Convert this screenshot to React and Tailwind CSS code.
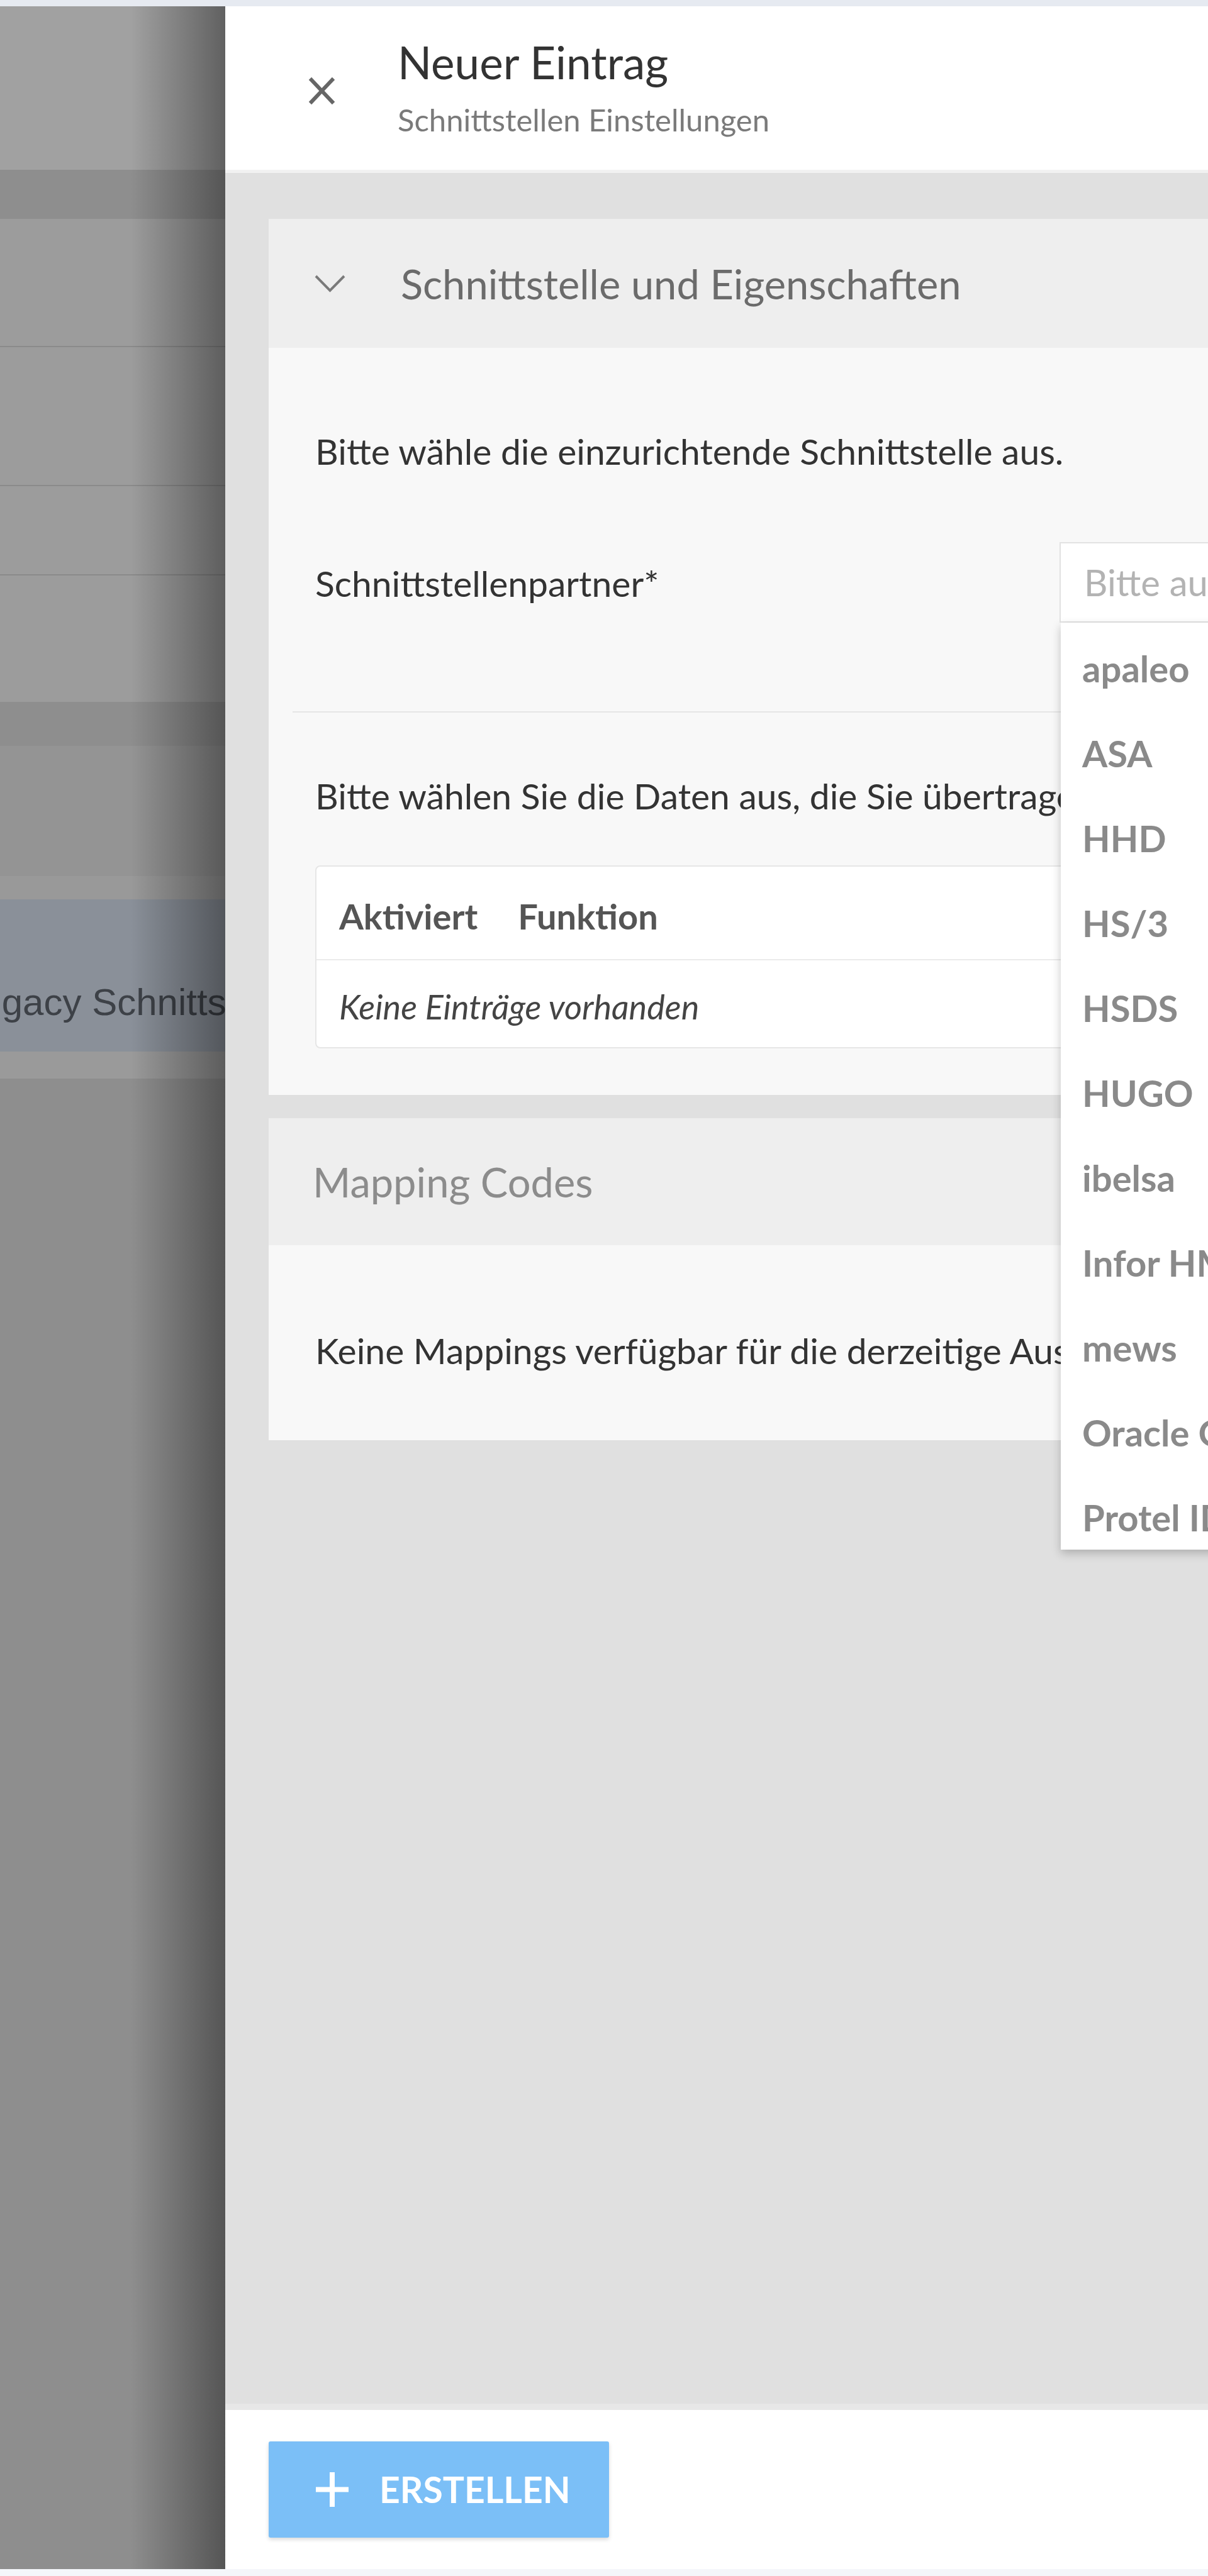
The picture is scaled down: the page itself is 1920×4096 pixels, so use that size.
import React from 'react';

const partners = ['apaleo', 'ASA', 'HHD', 'HS/3', 'HSDS', 'HUGO', 'ibelsa', 'Infor HMS', 'mews', 'Oracle OPERA', 'Protel IDS', 'Protel Air'];

function CloseIcon() {
  return (
    <svg viewBox="0 0 43 45" className="w-[43px] h-[45px] shrink-0">
      <line x1="5" y1="5" x2="38" y2="40" stroke="#666" strokeWidth="6" strokeLinecap="square" />
      <line x1="38" y1="5" x2="5" y2="40" stroke="#666" strokeWidth="6" strokeLinecap="square" />
    </svg>
  );
}

function Chevron() {
  return (
    <svg viewBox="0 0 51 29" className="w-[51px] h-[29px] shrink-0">
      <polyline points="3,3 25.5,26 48,3" fill="none" stroke="#7a7a7a" strokeWidth="4" />
    </svg>
  );
}

function PlusIcon() {
  return (
    <svg viewBox="0 0 52 55" className="w-[52px] h-[55px] shrink-0">
      <line x1="26" y1="0" x2="26" y2="55" stroke="#fff" strokeWidth="8" />
      <line x1="0" y1="27.5" x2="52" y2="27.5" stroke="#fff" strokeWidth="8" />
    </svg>
  );
}

// dimmed page behind the drawer
function Backdrop() {
  return (
    <div className="relative w-[358px] shrink-0 flex flex-col overflow-hidden">
      <div className="h-[260px] bg-[#a1a1a1]" />
      <div className="h-[78px] bg-[#8e8e8e]" />
      <div className="h-[204px] bg-[#9c9c9c] border-b-2 border-[#8a8a8a]" />
      <div className="h-[221px] bg-[#9c9c9c] border-b-2 border-[#8a8a8a]" />
      <div className="h-[142px] bg-[#9c9c9c] border-b-2 border-[#8a8a8a]" />
      <div className="h-[201px] bg-[#9c9c9c]" />
      <div className="h-[70px] bg-[#8e8e8e]" />
      <div className="h-[207px] bg-[#949494]" />
      <div className="h-[37px] bg-[#999999]" />
      <div className="h-[242px] bg-[#8a9099] pt-[129px]">
        <span className="block -ml-[64px] whitespace-nowrap font-['Liberation_Sans',sans-serif] text-[60px] leading-[69px] text-[#3d4147]">
          Legacy Schnittstellen
        </span>
      </div>
      <div className="h-[43px] bg-[#9a9a9a]" />
      <div className="flex-1 bg-[#8e8e8e]" />
      <div className="absolute inset-y-0 right-0 w-[150px] bg-linear-to-r from-black/0 to-black/40" />
    </div>
  );
}

export default function App() {
  return (
    <div className="relative w-[1920px] h-[4096px] overflow-hidden bg-[#f4f6fa] flex flex-col font-['Lato',sans-serif]">
      <div className="h-[10px] bg-[#e6eaf1] shrink-0" />
      <div className="flex h-[4075px] shrink-0">
        <Backdrop />

        <div className="w-[1800px] shrink-0 flex flex-col">
          <header className="h-[265px] shrink-0 bg-white border-b-[5px] border-[#f1f1f1] flex items-start pl-[132px]">
            <div className="mt-[112px]">
              <CloseIcon />
            </div>
            <div className="ml-[99px] mt-[46px]">
              <h1 className="text-[71px] leading-[85px] text-[#333]">Neuer Eintrag</h1>
              <p className="mt-[20px] text-[49px] leading-[59px] text-[#7a7a7a]">Schnittstellen Einstellungen</p>
            </div>
          </header>

          <main className="flex-1 bg-[#e0e0e0] pt-[73px] px-[69px]">
            <section>
              <div className="h-[205px] bg-[#eeeeee] flex items-center pl-[72px]">
                <Chevron />
                <span className="ml-[87px] text-[65px] leading-[78px] text-[#6b6b6b]">Schnittstelle und Eigenschaften</span>
              </div>
              <div className="bg-[#f8f8f8] px-[38px] pb-[74px]">
                <div className="px-[36px] pt-[130px]">
                  <p className="text-[57px] leading-[68px] text-[#333]">Bitte wähle die einzurichtende Schnittstelle aus.</p>
                  <div className="mt-[111px] flex">
                    <div className="w-[1183px] shrink-0 pt-[31px] text-[57px] leading-[68px] text-[#333]">Schnittstellenpartner*</div>
                    <div className="relative flex-1 h-[128px] bg-white border-2 border-[#e2e2e2] flex items-center pl-[37px]">
                      <span className="text-[58px] leading-[70px] text-[#b3b3b3] whitespace-nowrap">Bitte auswählen</span>
                      <ul className="absolute left-0 top-[126px] w-full h-[1474px] overflow-hidden bg-white pt-[5px] z-10 shadow-[0_6px_14px_rgba(0,0,0,0.22)]">
                        {partners.map((p) => (
                          <li key={p} className="h-[135px] flex items-center pl-[34px] text-[58px] leading-[70px] font-bold text-[#8a8a8a] whitespace-nowrap">
                            {p}
                          </li>
                        ))}
                      </ul>
                    </div>
                  </div>
                </div>
                <div className="mt-[141px] h-[2px] bg-[#e6e6e6]" />
                <div className="px-[36px] pt-[98px]">
                  <p className="w-[1185px] overflow-hidden text-[57px] leading-[68px] text-[#333] whitespace-nowrap">Bitte wählen Sie die Daten aus, die Sie übertragen möchten.</p>
                  <div className="mt-[77px] rounded-[8px] border-2 border-[#e6e6e6] bg-white overflow-hidden">
                    <div className="h-[149px] border-b-2 border-[#ebebeb] flex items-start pt-[45px] pl-[36px] text-[56px] leading-[67px] font-bold text-[#555]">
                      <span>Aktiviert</span>
                      <span className="ml-[64px]">Funktion</span>
                    </div>
                    <div className="h-[138px] pt-[41px] pl-[36px] text-[54px] leading-[65px] italic text-[#444]">Keine Einträge vorhanden</div>
                  </div>
                </div>
              </div>
            </section>

            <section className="mt-[37px]">
              <div className="h-[202px] bg-[#eeeeee] flex items-center pl-[70px]">
                <span className="text-[65px] leading-[78px] text-[#8c8c8c]">Mapping Codes</span>
              </div>
              <div className="h-[310px] bg-[#f8f8f8] pt-[133px] pl-[74px]">
                <p className="w-[1186px] overflow-hidden text-[57px] leading-[68px] text-[#333] whitespace-nowrap">Keine Mappings verfügbar für die derzeitige Auswahl.</p>
              </div>
            </section>
          </main>

          <footer className="h-[263px] shrink-0 bg-white border-t-[10px] border-[#e7e7e7] pt-[50px] pl-[69px]">
            <button className="w-[541px] h-[153px] bg-[#7bbff7] rounded-[3px] shadow-[0_3px_6px_rgba(0,0,0,0.15)] flex items-center pl-[75px]">
              <PlusIcon />
              <span className="ml-[49px] text-[57px] leading-none font-bold text-white">ERSTELLEN</span>
            </button>
          </footer>
        </div>
      </div>
      <div className="flex-1 bg-[#f4f6fa]" />
    </div>
  );
}
